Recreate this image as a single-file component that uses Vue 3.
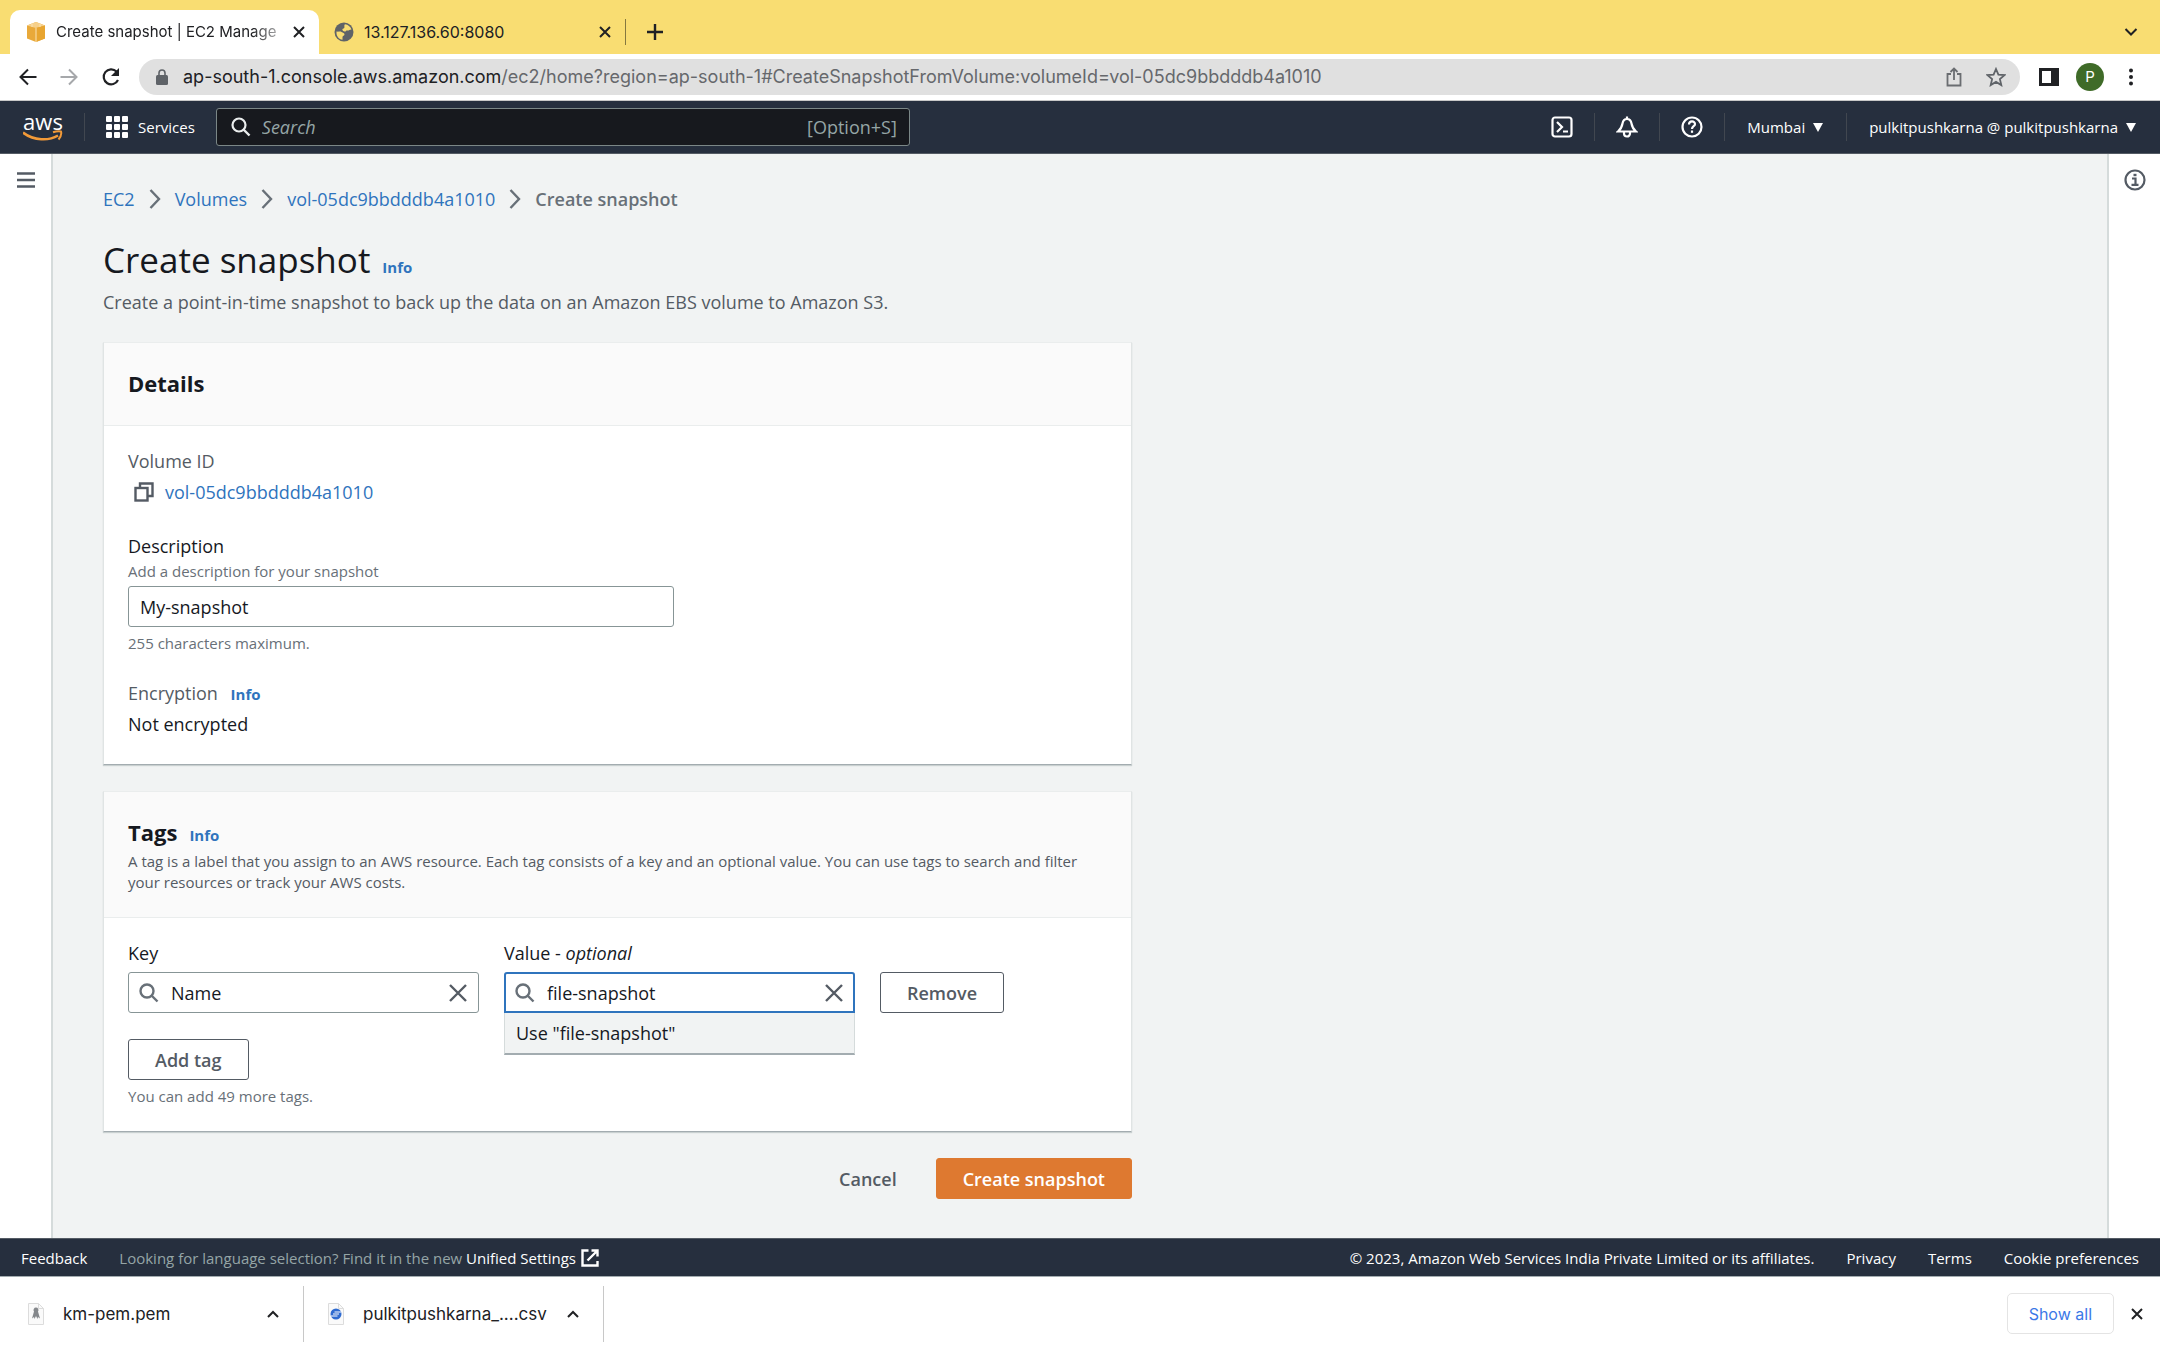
<script setup>
import { ref } from 'vue'

const url = ref('')
const description = ref('My-snapshot')
const tagKey = ref('Name')
const tagValue = ref('file-snapshot')
const crumbs = ['EC2', 'Volumes', 'vol-05dc9bbdddb4a1010']
const footerLinks = ['Privacy', 'Terms', 'Cookie preferences']
</script>

<template>
  <div class="window">
    <header class="tabs">
      <div class="tab active">
        <svg class="favicon" viewBox="0 0 20 20" width="20" height="20">
          <path d="M1 3.500 10 0l9 3.500v13L10 20l-9-3.500z" fill="#e9a93a" />
          <path d="M1 3.500 10 0l9 3.500L10 6z" fill="#f6d08a" />
          <path d="M10 6v14l9-3.500v-13z" fill="#e8a530" />
          <path d="M10 6v14M6 1.500V5M14 1.500V5" stroke="#fbe3b4" stroke-width="1" />
        </svg>
        <span class="tab-title fade">Create snapshot | EC2 Manage</span>
        <button class="bare" aria-label="Close tab">
          <svg viewBox="0 0 12 12" width="12" height="12"><path d="M1 1l10 10M11 1 1 11" stroke="#202124" stroke-width="2" /></svg>
        </button>
      </div>
      <div class="tab">
        <svg class="favicon" viewBox="0 0 20 20" width="20" height="20">
          <circle cx="10" cy="10" r="9.500" fill="#5f6368" />
          <path d="M2.500 9.500c2 .5 4-.5 5 .5 1.500 1 3 .5 3 2.500 0 1.500-2 1-2 2.500v2.800C5 17.500 2 14 2.500 9.500zM11 2.200c3 .3 5.500 2.300 6.500 5.300-1.500-.5-2.500 1.500-4.500 1-1.500-.5-.5 1.500-2.500 1S7.500 7 9.500 6.500 9.500 3 11 2.200z" fill="#f9dd72" />
        </svg>
        <span class="tab-title">13.127.136.60:8080</span>
        <button class="bare" aria-label="Close tab">
          <svg viewBox="0 0 12 12" width="12" height="12"><path d="M1 1l10 10M11 1 1 11" stroke="#202124" stroke-width="2" /></svg>
        </button>
      </div>
      <span class="tab-rule"></span>
      <button class="bare new-tab" aria-label="New tab">
        <svg viewBox="0 0 16 16" width="16" height="16"><path d="M8 0v16M0 8h16" stroke="#202124" stroke-width="2.400" /></svg>
      </button>
      <button class="bare tab-search" aria-label="Search tabs">
        <svg viewBox="0 0 14 10" width="14" height="10"><path d="M1.500 2 7 7.500 12.500 2" fill="none" stroke="#202124" stroke-width="2" /></svg>
      </button>
    </header>

    <div class="toolbar">
      <button class="bare" aria-label="Back">
        <svg viewBox="0 0 18 18" width="18" height="18"><path d="M17.500 9H2M9 1.500 1.500 9 9 16.500" fill="none" stroke="#202124" stroke-width="2" /></svg>
      </button>
      <button class="bare" aria-label="Forward">
        <svg viewBox="0 0 18 18" width="18" height="18"><path d="M.5 9H16M9 1.500 16.500 9 9 16.500" fill="none" stroke="#a6a8ab" stroke-width="2" /></svg>
      </button>
      <button class="bare" aria-label="Reload">
        <svg viewBox="0 0 20 20" width="20" height="20"><path d="M17 13A7.500 7.500 0 1 1 15.500 4.500" fill="none" stroke="#202124" stroke-width="2.200" /><path d="M18 1v8h-8z" fill="#202124" /></svg>
      </button>
      <div class="address">
        <svg viewBox="0 0 12 16" width="12" height="16"><rect y="6" width="12" height="10" rx="1.500" fill="#5f6368" /><path d="M3 7V4a3 3 0 0 1 6 0v3" fill="none" stroke="#5f6368" stroke-width="1.600" /></svg>
        <label class="url">
          <span class="host">ap-south-1.console.aws.amazon.com</span><span>/ec2/home?region=ap-south-1#CreateSnapshotFromVolume:volumeId=vol-05dc9bbdddb4a1010</span>
          <input v-model="url" class="url-input" aria-label="Address" />
        </label>
        <button class="bare" aria-label="Share">
          <svg viewBox="0 0 16 20" width="16" height="20"><path d="M5 7H1.500v11.500h13V7H11M8 13V2M4.500 5 8 1.500 11.500 5" fill="none" stroke="#6a6d71" stroke-width="1.800" /></svg>
        </button>
        <button class="bare star" aria-label="Bookmark">
          <svg viewBox="0 0 20 20" width="20" height="20"><path d="M10 2l2.400 5.600 6.100.5-4.600 4 1.400 6L10 14.900 4.700 18.100l1.400-6-4.600-4 6.100-.5z" fill="none" stroke="#5f6368" stroke-width="1.800" /></svg>
        </button>
      </div>
      <button class="bare" aria-label="Side panel">
        <svg viewBox="0 0 20 18" width="20" height="18"><path d="M0 0h20v18H0zM3 3v12h9V3z" fill="#202124" fill-rule="evenodd" /></svg>
      </button>
      <button class="avatar" aria-label="Profile">P</button>
      <button class="bare" aria-label="Menu">
        <svg viewBox="0 0 4 18" width="4" height="18"><circle cx="2" cy="2.500" r="2" fill="#202124" /><circle cx="2" cy="9" r="2" fill="#202124" /><circle cx="2" cy="15.500" r="2" fill="#202124" /></svg>
      </button>
    </div>

    <nav class="awsnav">
      <a href="#" class="logo" aria-label="aws">
        <span class="logo-text">aws</span>
        <svg viewBox="0 0 40 12" width="40" height="12"><path d="M0 2.500C11 11 26 11 35 5.500" fill="none" stroke="#f29a38" stroke-width="2.600" /><path d="M30 2.200c3-1 6.500-1.200 8-.7.6 2-.4 5.500-2.500 8" fill="none" stroke="#f29a38" stroke-width="2" /></svg>
      </a>
      <span class="rule"></span>
      <button class="bare services">
        <svg viewBox="0 0 22 22" width="22" height="22" fill="#fff"><template v-for="r in 3" :key="r"><rect v-for="c in 3" :key="c" :x="(c - 1) * 8" :y="(r - 1) * 8" width="6" height="6" rx="1" /></template></svg>
        Services
      </button>
      <label class="search">
        <svg viewBox="0 0 20 20" width="20" height="20"><circle cx="8" cy="8" r="6.500" fill="none" stroke="#eaeded" stroke-width="2.200" /><path d="M12.500 12.500 18.500 18.500" stroke="#eaeded" stroke-width="2.400" /></svg>
        <input type="text" placeholder="Search" aria-label="Search" />
        <span>[Option+S]</span>
      </label>
      <div class="tools">
        <button class="bare tool" aria-label="CloudShell">
          <svg viewBox="0 0 22 22" width="22" height="22" fill="none" stroke="#fff" stroke-width="2.200"><rect x="1.500" y="1.500" width="19" height="19" rx="2.500" /><path d="M6 6l5 5-5 5M12 15.500h5" /></svg>
        </button>
        <button class="bare tool" aria-label="Notifications">
          <svg viewBox="0 0 22 22" width="22" height="22" fill="none" stroke="#fff" stroke-width="2.200"><path d="M2 15.500c3.500-3 4-5 4.500-8C7 4.500 9 3 11 3s4 1.500 4.500 4.500c.5 3 1 5 4.500 8zM11 3V.5M8 16v1.500a3 3 0 0 0 6 0V16" /></svg>
        </button>
        <button class="bare tool" aria-label="Help">
          <svg viewBox="0 0 22 22" width="22" height="22" fill="none" stroke="#fff" stroke-width="2.200"><circle cx="11" cy="11" r="9.500" /><path d="M8 8.500c0-4 6-4 6-.5 0 2.500-3 2-3 5" /><path d="M11 14.500v2.300" /></svg>
        </button>
        <button class="bare menu">Mumbai <svg viewBox="0 0 10 9" width="10" height="9"><path d="M0 0h10L5 9z" fill="#fff" /></svg></button>
        <button class="bare menu user">pulkitpushkarna @ pulkitpushkarna <svg viewBox="0 0 10 9" width="10" height="9"><path d="M0 0h10L5 9z" fill="#fff" /></svg></button>
      </div>
    </nav>

    <div class="body">
      <aside class="rail left">
        <button class="bare" aria-label="Open navigation">
          <svg viewBox="0 0 18 16" width="18" height="16"><path d="M0 1.500h18M0 8h18M0 14.500h18" stroke="#545b64" stroke-width="2.500" /></svg>
        </button>
      </aside>
      <main class="main">
        <nav class="crumbs" aria-label="Breadcrumb">
          <template v-for="c in crumbs" :key="c">
            <a href="#">{{ c }}</a>
            <svg viewBox="0 0 12 20" width="12" height="20"><path d="M1.500 1 10 10 1.500 19" fill="none" stroke="#687078" stroke-width="2.400" /></svg>
          </template>
          <span class="current">Create snapshot</span>
        </nav>
        <div class="title-row">
          <h1>Create snapshot</h1>
          <a href="#" class="info">Info</a>
        </div>
        <p class="lead">Create a point-in-time snapshot to back up the data on an Amazon EBS volume to Amazon S3.</p>

        <form class="form" @submit.prevent>
          <section class="card">
            <header class="card-head roomy"><h2>Details</h2></header>
            <div class="card-body">
              <div class="muted">Volume ID</div>
              <div class="volume">
                <button class="bare" type="button" aria-label="Copy volume ID">
                  <svg viewBox="0 0 20 20" width="20" height="20" fill="none" stroke="#545b64" stroke-width="2.400"><rect x="1.500" y="6" width="12" height="12.500" /><path d="M6 6V1.500h12.500V14H14" /></svg>
                </button>
                <a href="#">vol-05dc9bbdddb4a1010</a>
              </div>
              <label class="label desc-label" for="description">Description</label>
              <div class="hint above">Add a description for your snapshot</div>
              <input id="description" v-model="description" class="box desc" type="text" />
              <div class="hint below">255 characters maximum.</div>
              <div class="muted enc">Encryption <a href="#" class="info">Info</a></div>
              <div class="value">Not encrypted</div>
            </div>
          </section>

          <section class="card">
            <header class="card-head">
              <div class="title-row"><h2>Tags</h2><a href="#" class="info">Info</a></div>
              <p class="sub">A tag is a label that you assign to an AWS resource. Each tag consists of a key and an optional value. You can use tags to search and filter your resources or track your AWS costs.</p>
            </header>
            <div class="card-body tags">
              <div class="tag-row">
                <div class="field">
                  <label class="label" for="key">Key</label>
                  <div class="box combo">
                    <svg viewBox="0 0 20 20" width="20" height="20" fill="none" stroke="#687078" stroke-width="2.400"><circle cx="8" cy="8" r="6.500" /><path d="M12.500 12.500 18.500 18.500" /></svg>
                    <input id="key" v-model="tagKey" type="text" />
                    <button class="bare" type="button" aria-label="Clear key"><svg viewBox="0 0 18 18" width="18" height="18"><path d="M1 1l16 16M17 1 1 17" stroke="#545b64" stroke-width="2.400" /></svg></button>
                  </div>
                </div>
                <div class="field">
                  <label class="label" for="value">Value - <i>optional</i></label>
                  <div class="box combo focused">
                    <svg viewBox="0 0 20 20" width="20" height="20" fill="none" stroke="#687078" stroke-width="2.400"><circle cx="8" cy="8" r="6.500" /><path d="M12.500 12.500 18.500 18.500" /></svg>
                    <input id="value" v-model="tagValue" type="text" />
                    <button class="bare" type="button" aria-label="Clear value"><svg viewBox="0 0 18 18" width="18" height="18"><path d="M1 1l16 16M17 1 1 17" stroke="#545b64" stroke-width="2.400" /></svg></button>
                  </div>
                  <div class="dropdown" role="listbox"><div role="option">Use "{{ tagValue }}"</div></div>
                </div>
                <button class="btn" type="button">Remove</button>
              </div>
              <button class="btn" type="button">Add tag</button>
              <div class="hint below">You can add 49 more tags.</div>
            </div>
          </section>

          <div class="actions">
            <button class="btn link" type="button">Cancel</button>
            <button class="btn primary" type="submit">Create snapshot</button>
          </div>
        </form>
      </main>
      <aside class="rail right">
        <button class="bare" aria-label="Open info panel">
          <svg viewBox="0 0 22 22" width="22" height="22" fill="none" stroke="#545b64" stroke-width="2.200"><circle cx="11" cy="11" r="9.500" /><path d="M8 9.500h3.500V15.500M7.500 15.800h7" /><path d="M9.500 4.800h3v2.400h-3z" fill="#545b64" stroke="none" /></svg>
        </button>
      </aside>
    </div>

    <footer class="foot">
      <a href="#">Feedback</a>
      <span class="lang">Looking for language selection? Find it in the new <a href="#">Unified Settings</a></span>
      <svg viewBox="0 0 18 18" width="18" height="18" fill="none" stroke="#fff" stroke-width="2.400"><path d="M7.500 1.500H1.500V16.500H16.500V12M10.500 1.500h6v6M16.500 1.500 6.500 11.500" /></svg>
      <span class="legal">© 2023, Amazon Web Services India Private Limited or its affiliates.</span>
      <a v-for="l in footerLinks" :key="l" href="#">{{ l }}</a>
    </footer>

    <div class="downloads">
      <div class="file">
        <svg viewBox="0 0 16 22" width="16" height="22"><path d="M.5.5h10l5 5v16H.5z" fill="#fafafa" stroke="#dcdcdc" /><path d="M10.500.5v5h5" fill="none" stroke="#dcdcdc" /><path d="M8 4.500a2.500 2.500 0 0 1 2 4L12 15.500l-2-1.500-.5 2L8 13l-1.500 3-.5-2-2 1.500 2-7A2.500 2.500 0 0 1 8 4.500z" fill="#85888c" /></svg>
        <span>km-pem.pem</span>
        <button class="bare" aria-label="File options"><svg viewBox="0 0 12 8" width="12" height="8"><path d="M1 7l5-5 5 5" fill="none" stroke="#202124" stroke-width="2" /></svg></button>
      </div>
      <div class="file">
        <svg viewBox="0 0 16 22" width="16" height="22"><path d="M.5.5h10l5 5v16H.5z" fill="#fafafa" stroke="#dcdcdc" /><path d="M10.500.5v5h5" fill="none" stroke="#dcdcdc" /><circle cx="8" cy="11" r="5.500" fill="#2f6bd0" /><path d="M13 9H6.500M3 13h6.500M5 11h6" fill="none" stroke="#fff" stroke-width="1" /></svg>
        <span>pulkitpushkarna_....csv</span>
        <button class="bare" aria-label="File options"><svg viewBox="0 0 12 8" width="12" height="8"><path d="M1 7l5-5 5 5" fill="none" stroke="#202124" stroke-width="2" /></svg></button>
      </div>
      <button class="show-all">Show all</button>
      <button class="bare" aria-label="Close downloads"><svg viewBox="0 0 12 12" width="12" height="12"><path d="M1 1l10 10M11 1 1 11" stroke="#202124" stroke-width="2" /></svg></button>
    </div>
  </div>
</template>

<style>
body {
  margin: 0;
}
</style>

<style scoped>
* {
  box-sizing: border-box;
}
.window {
  display: flex;
  flex-direction: column;
  min-height: 100vh;
  background: #fff;
  color: #16191f;
  font-family: "Open Sans", "Noto Sans", sans-serif;
  font-size: 18px;
  line-height: 24px;
}
a {
  color: #2f74bd;
  text-decoration: none;
}
svg {
  display: block;
  flex: none;
}
h1, h2, p {
  margin: 0;
}
input {
  font: inherit;
  color: inherit;
}
button {
  font: inherit;
  cursor: pointer;
}
.bare {
  display: flex;
  align-items: center;
  flex: none;
  padding: 0;
  border: 0;
  background: none;
  color: inherit;
}

.tabs {
  display: flex;
  align-items: flex-end;
  height: 54px;
  padding: 0 22px 0 10px;
  background: #f9dd72;
  font-family: Inter, sans-serif;
  font-size: 16px;
  color: #202124;
}
.tab {
  display: flex;
  align-items: center;
  width: 306px;
  height: 44px;
  padding: 0 14px 0 15px;
}
.tab.active {
  width: 309px;
  padding-left: 16px;
  background: #fff;
  border-radius: 10px 10px 0 0;
  font-size: 15px;
}
.tab-title {
  flex: 1;
  margin: 0 10px;
  white-space: nowrap;
}
.fade {
  mask-image: linear-gradient(90deg, #000 86%, transparent 105%);
}
.tab-rule {
  width: 1px;
  height: 26px;
  margin: 0 21px 9px 0;
  background: #85783f;
}
.new-tab, .tab-search {
  height: 44px;
}
.tab-search {
  margin-left: auto;
}

.toolbar {
  display: flex;
  align-items: center;
  gap: 23px;
  height: 47px;
  padding: 0 27px 0 19px;
  border-bottom: 1px solid #c8c8c8;
  font-family: Inter, sans-serif;
}
.address {
  display: flex;
  flex: 1;
  align-items: center;
  gap: 24px;
  min-width: 0;
  height: 36px;
  margin: 0 -4px 0 -5px;
  padding: 0 14px 0 17px;
  border-radius: 18px;
  background: #e0e0e0;
  color: #66686c;
}
.url {
  display: flex;
  flex: 1;
  min-width: 0;
  margin-left: -9px;
  overflow: hidden;
  white-space: nowrap;
}
.host {
  color: #202124;
}
.url-input {
  flex: 1;
  min-width: 0;
  padding: 0;
  border: 0;
  outline: 0;
  background: none;
}
.avatar {
  width: 28px;
  height: 28px;
  margin: 0 2px 0 -6px;
  padding: 0;
  border: 0;
  border-radius: 50%;
  background: #3f6b28;
  color: #fff;
  font-size: 15px;
}

.awsnav {
  display: flex;
  align-items: center;
  height: 53px;
  padding: 0 24px 0 23px;
  background: #262f3e;
  border-bottom: 1px solid #545b64;
  color: #fff;
  font-size: 15px;
  font-weight: 500;
}
.logo {
  display: flex;
  flex-direction: column;
  align-items: center;
  width: 40px;
}
.logo-text {
  color: #fff;
  font-size: 22px;
  line-height: 18px;
}
.rule {
  width: 1px;
  height: 28px;
  margin: 0 21px;
  background: #414750;
}
.services {
  gap: 10px;
}
.search {
  display: flex;
  align-items: center;
  gap: 11px;
  width: 694px;
  height: 38px;
  margin-left: 21px;
  padding: 0 12px 0 14px;
  border: 1px solid #7b8787;
  border-radius: 3px;
  background: #17191e;
  color: #95a5a6;
  font-size: 18px;
  font-weight: 400;
}
.search input {
  flex: 1;
  min-width: 0;
  padding: 0;
  border: 0;
  outline: 0;
  background: none;
}
.search input::placeholder {
  color: #95a5a6;
  font-style: italic;
  opacity: 1;
}
.tools {
  display: flex;
  margin-left: auto;
}
.tool {
  height: 28px;
  padding: 0 21px;
  border-right: 1px solid #414750;
}
.menu {
  gap: 8px;
  height: 28px;
  padding: 0 23px 0 22px;
}
.menu.user {
  padding-right: 0;
  border-left: 1px solid #414750;
}

.body {
  display: flex;
  flex: 1;
}
.rail {
  display: flex;
  flex: none;
  align-items: flex-start;
  justify-content: center;
  width: 53px;
}
.left {
  padding-top: 18px;
  border-right: 2px solid #d5dbdb;
}
.right {
  padding-top: 15px;
  border-left: 2px solid #d5dbdb;
}
.main {
  flex: 1;
  min-width: 0;
  padding: 31px 50px 36px;
  background: #f1f3f3;
}
.crumbs {
  display: flex;
  align-items: center;
  gap: 14px;
  height: 28px;
}
.current {
  color: #687078;
  font-weight: 600;
}
.title-row {
  display: flex;
  align-items: baseline;
  gap: 12px;
}
.crumbs + .title-row {
  margin-top: 27px;
}
h1 {
  font-size: 35px;
  font-weight: 400;
  line-height: 40px;
}
.info {
  font-size: 15px;
  font-weight: 700;
}
.lead {
  margin-top: 10px;
  color: #545b64;
}
.form {
  display: flex;
  flex-direction: column;
  gap: 26px;
  max-width: 1029px;
  margin-top: 28px;
}
.card {
  background: #fff;
  border: 1px solid #e0e4e4;
  border-top-color: #eaeded;
  border-bottom-color: #a3acb0;
  box-shadow: 0 1px 1px #c9d0d0;
}
.card-head {
  padding: 24px 24px;
  background: #fafafa;
  border-bottom: 1px solid #eaeded;
}
.card-head.roomy {
  padding-bottom: 26px;
}
h2 {
  font-size: 22px;
  font-weight: 700;
  line-height: 32px;
}
.card-body {
  padding: 23px 24px 28px;
}
.muted {
  color: #545b64;
}
.volume {
  display: flex;
  gap: 11px;
  margin-top: 7px;
  padding-left: 6px;
}
.label {
  display: block;
}
.desc-label {
  margin-top: 30px;
}
.hint {
  color: #687078;
  font-size: 15px;
  line-height: 20px;
}
.above {
  margin-top: 3px;
}
.below {
  margin-top: 6px;
}
.box {
  width: 100%;
  height: 41px;
  border: 1px solid #879596;
  border-radius: 3px;
  background: #fff;
}
.desc {
  display: block;
  max-width: 546px;
  margin-top: 5px;
  padding: 0 11px;
}
.enc {
  margin-top: 28px;
}
.enc .info {
  margin-left: 8px;
}
.value {
  margin-top: 6px;
}
.sub {
  margin-top: 3px;
  color: #545b64;
  font-size: 15px;
  line-height: 21px;
}
.tags {
  padding-bottom: 25px;
}
.tag-row {
  display: flex;
  align-items: flex-end;
  gap: 25px;
  margin-bottom: 26px;
}
.field {
  position: relative;
  width: 351px;
}
.combo {
  display: flex;
  align-items: center;
  gap: 12px;
  margin-top: 7px;
  padding: 0 11px 0 10px;
}
.combo input {
  flex: 1;
  min-width: 0;
  padding: 0;
  border: 0;
  outline: 0;
}
.focused {
  border: 2px solid #2f74bd;
  padding: 0 10px 0 9px;
  border-radius: 3px 3px 0 0;
}
.dropdown {
  position: absolute;
  top: 100%;
  left: 0;
  right: 0;
  padding: 8px 11px;
  background: #f1f3f3;
  border: 1px solid #d5dbdb;
  border-top: 0;
  border-bottom: 2px solid #a3acb0;
}
.btn {
  height: 41px;
  padding: 0 26px;
  border: 1px solid #545b64;
  border-radius: 3px;
  background: #fff;
  color: #545b64;
  font-weight: 600;
}
.actions {
  display: flex;
  justify-content: flex-end;
  gap: 12px;
}
.link {
  border-color: transparent;
  background: none;
}
.primary {
  border-color: #de7930;
  background: #de7930;
  color: #fff;
}

.foot {
  display: flex;
  align-items: center;
  height: 39px;
  padding: 0 21px;
  background: #262f3e;
  border-top: 1px solid #545b64;
  border-bottom: 1px solid #a3acb0;
  color: #fff;
  font-size: 15px;
  font-weight: 500;
}
.foot a {
  color: #fff;
}
.lang {
  margin: 0 5px 0 32px;
  color: #95a5a6;
}
.legal {
  margin-left: auto;
}
.legal ~ a {
  margin-left: 32px;
}

.downloads {
  display: flex;
  align-items: center;
  height: 73px;
  padding: 0 17px 0 4px;
  font-family: Inter, sans-serif;
  font-size: 17px;
  color: #202124;
}
.file {
  display: flex;
  align-items: center;
  gap: 19px;
  height: 56px;
  min-width: 300px;
  padding: 0 24px;
  border-right: 1px solid #c8c8c8;
}
.file span {
  flex: 1;
}
.show-all {
  height: 41px;
  margin: 0 17px 0 auto;
  padding: 0 21px;
  border: 1px solid #e4e4e4;
  border-radius: 5px;
  background: #fff;
  color: #3b78e7;
  font-size: 16px;
}
</style>
